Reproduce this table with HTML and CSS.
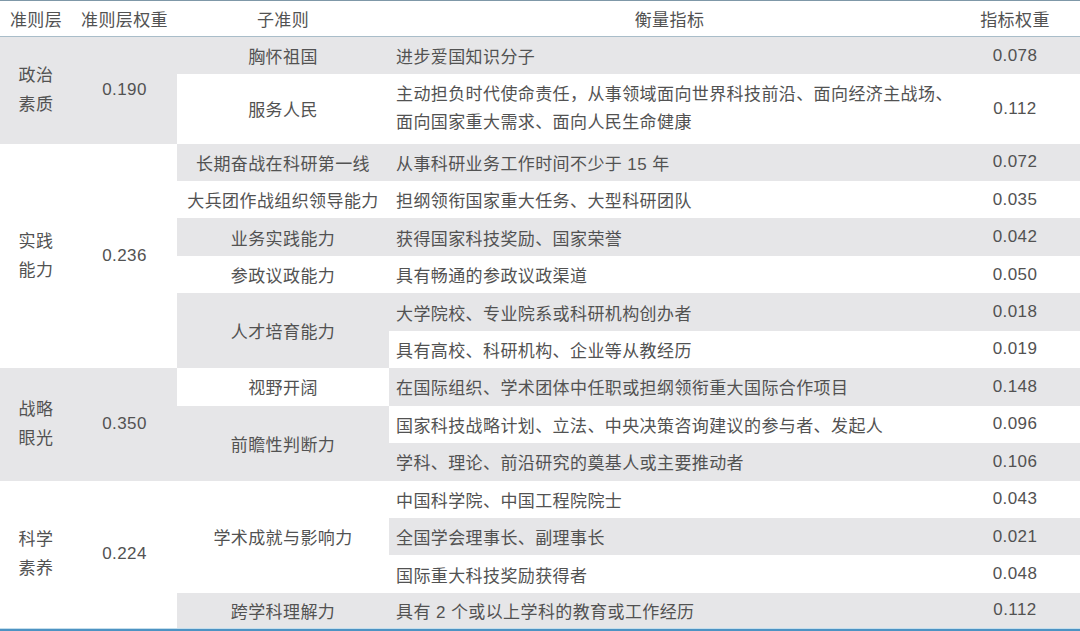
FILE: index.html
```html
<!DOCTYPE html>
<html lang="zh-CN">
<head>
<meta charset="utf-8">
<title>指标体系</title>
<link rel="stylesheet" href="styles.css">
</head>
<body>
<div class="sheet">
  <div class="grid">
    <div class="th">准则层</div>
    <div class="th">准则层权重</div>
    <div class="th">子准则</div>
    <div class="th">衡量指标</div>
    <div class="th">指标权重</div>

    <!-- 政治素质 -->
    <div class="cell g span2 stack">政治<br>素质</div>
    <div class="cell g span2">0.190</div>
    <div class="cell g">胸怀祖国</div>
    <div class="cell g left">进步爱国知识分子</div>
    <div class="cell g">0.078</div>
    <div class="cell">服务人民</div>
    <div class="cell left multi">主动担负时代使命责任，从事领域面向世界科技前沿、面向经济主战场、<br>面向国家重大需求、面向人民生命健康</div>
    <div class="cell">0.112</div>

    <!-- 实践能力 -->
    <div class="cell span6 stack">实践<br>能力</div>
    <div class="cell span6">0.236</div>
    <div class="cell g">长期奋战在科研第一线</div>
    <div class="cell g left">从事科研业务工作时间不少于 15 年</div>
    <div class="cell g">0.072</div>
    <div class="cell">大兵团作战组织领导能力</div>
    <div class="cell left">担纲领衔国家重大任务、大型科研团队</div>
    <div class="cell">0.035</div>
    <div class="cell g">业务实践能力</div>
    <div class="cell g left">获得国家科技奖励、国家荣誉</div>
    <div class="cell g">0.042</div>
    <div class="cell">参政议政能力</div>
    <div class="cell left">具有畅通的参政议政渠道</div>
    <div class="cell">0.050</div>
    <div class="cell g span2">人才培育能力</div>
    <div class="cell g left">大学院校、专业院系或科研机构创办者</div>
    <div class="cell g">0.018</div>
    <div class="cell left">具有高校、科研机构、企业等从教经历</div>
    <div class="cell">0.019</div>

    <!-- 战略眼光 -->
    <div class="cell g span3 stack">战略<br>眼光</div>
    <div class="cell g span3">0.350</div>
    <div class="cell">视野开阔</div>
    <div class="cell g left">在国际组织、学术团体中任职或担纲领衔重大国际合作项目</div>
    <div class="cell g">0.148</div>
    <div class="cell g span2">前瞻性判断力</div>
    <div class="cell left">国家科技战略计划、立法、中央决策咨询建议的参与者、发起人</div>
    <div class="cell">0.096</div>
    <div class="cell g left">学科、理论、前沿研究的奠基人或主要推动者</div>
    <div class="cell g">0.106</div>

    <!-- 科学素养 -->
    <div class="cell span4 stack">科学<br>素养</div>
    <div class="cell span4">0.224</div>
    <div class="cell span3">学术成就与影响力</div>
    <div class="cell left">中国科学院、中国工程院院士</div>
    <div class="cell">0.043</div>
    <div class="cell g left">全国学会理事长、副理事长</div>
    <div class="cell g">0.021</div>
    <div class="cell left">国际重大科技奖励获得者</div>
    <div class="cell">0.048</div>
    <div class="cell g">跨学科理解力</div>
    <div class="cell g left">具有 2 个或以上学科的教育或工作经历</div>
    <div class="cell g">0.112</div>
  </div>
</div>
</body>
</html>
```

FILE: styles.css
```css
html, body {
  margin: 0;
  padding: 0;
  background: #ffffff;
}

body {
  width: 1080px;
  height: 631px;
  overflow: hidden;
  font-family: "Liberation Sans", "Noto Sans CJK SC", sans-serif;
  font-size: 17px;
  letter-spacing: 0.4px;
  color: #525252;
}

.sheet {
  border-top: 1px solid #7f98a8;
  border-bottom: 2px solid #4d93c3;
}

.grid {
  display: grid;
  grid-template-columns: 72px 105px 212px 561px 130px;
  grid-template-rows: 36px 37px 69.5px repeat(12, 37.46px) 35px;
  border-bottom: 1px solid #c4deec;
}

.th {
  box-sizing: border-box;
  border-bottom: 1px solid #a9bdc9;
  display: flex;
  align-items: center;
  justify-content: center;
  white-space: nowrap;
  padding-bottom: 1px;
}

.cell {
  display: flex;
  align-items: center;
  justify-content: center;
  white-space: nowrap;
  background: #ffffff;
}

.cell.g {
  background: #e6e6e8;
}

.cell.left {
  justify-content: flex-start;
  padding-left: 7px;
}

.cell.multi {
  line-height: 28px;
  padding-top: 1px;
}

.cell.stack {
  line-height: 29px;
}

.span2 { grid-row: span 2; }
.span3 { grid-row: span 3; }
.span4 { grid-row: span 4; }
.span6 { grid-row: span 6; }
```
